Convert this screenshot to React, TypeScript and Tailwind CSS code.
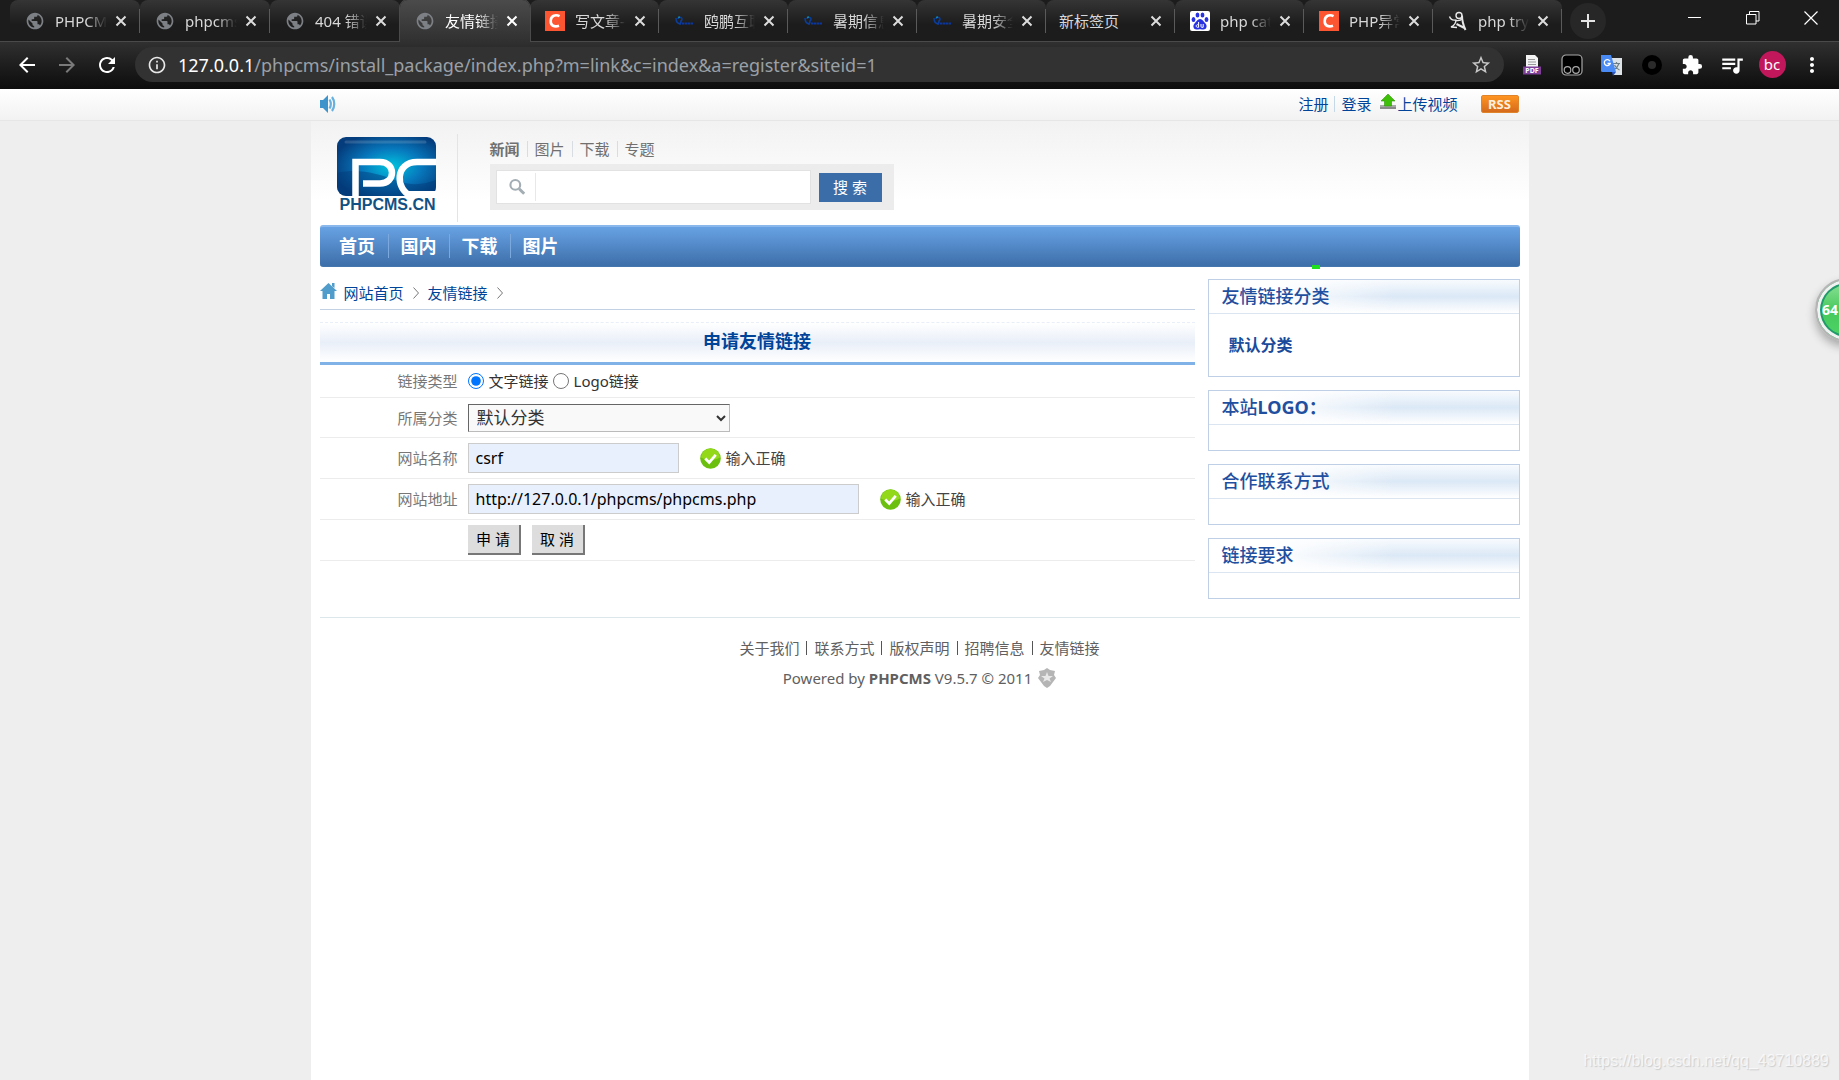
import { type ReactNode } from "react";
import {
  MdArrowBack,
  MdArrowForward,
  MdExtension,
  MdInfoOutline,
  MdMoreVert,
  MdPublic,
  MdQueueMusic,
  MdRefresh,
  MdStarBorder,
} from "react-icons/md";

type TabIcon = "globe" | "csdn" | "swirl" | "none" | "baidu" | "figure";
type Tab = { title: string; icon: TabIcon; active?: boolean; wide?: boolean };

const tabs: Tab[] = [
  { title: "PHPCMS", icon: "globe", wide: true },
  { title: "phpcms", icon: "globe", wide: true },
  { title: "404 错误", icon: "globe", wide: true },
  { title: "友情链接", icon: "globe", active: true, wide: true },
  { title: "写文章-C", icon: "csdn" },
  { title: "鸥鹏互联", icon: "swirl" },
  { title: "暑期信息", icon: "swirl" },
  { title: "暑期安全", icon: "swirl" },
  { title: "新标签页", icon: "none" },
  { title: "php cat", icon: "baidu" },
  { title: "PHP异常", icon: "csdn" },
  { title: "php try", icon: "figure" },
];

function Favicon({ kind }: { kind: TabIcon }) {
  if (kind === "globe") return <MdPublic className="size-5 shrink-0 text-[#7d8186]" />;
  if (kind === "csdn")
    return (
      <svg viewBox="0 0 20 20" className="size-5 shrink-0">
        <rect width="20" height="20" fill="#fc5531" />
        <path d="M14.6 5.2C10.4 3 6 4.600 5.700 9.800c-.3 5 3.700 6.600 8.300 4.900" fill="none" stroke="#fff" strokeWidth="2.600" />
      </svg>
    );
  if (kind === "swirl")
    return (
      <svg viewBox="0 0 20 20" className="size-5 shrink-0">
        <path d="M2 7c0 4 2 6 5 6M4 8a2 2 0 1 1 3 2c0 2-1 3-2 3" fill="none" stroke="#0a3d9c" strokeWidth="1.600" />
        <path d="M4 6.500l2-.5" stroke="#1487a8" strokeWidth="1.400" />
        <path d="M8 12.500h11" stroke="#0a36a0" strokeWidth="2.200" strokeDasharray="2.500 .5" />
      </svg>
    );
  if (kind === "baidu")
    return (
      <svg viewBox="0 0 20 20" className="size-5 shrink-0">
        <rect width="20" height="20" rx="2" fill="#fff" />
        <g fill="#2932e1">
          <ellipse cx="3.500" cy="8.500" rx="1.900" ry="2.500" />
          <ellipse cx="7.500" cy="4" rx="1.900" ry="2.600" />
          <ellipse cx="12.500" cy="4" rx="1.900" ry="2.600" />
          <ellipse cx="16.500" cy="8.500" rx="1.900" ry="2.500" />
          <path d="M10 8c2.500 0 3.500 2.500 5.500 4.500 2.200 2.300 1 6-2 6-1.500 0-2-.3-3.500-.3s-2 .3-3.500.3c-3 0-4.200-3.700-2-6C6.500 10.500 7.500 8 10 8z" />
        </g>
        <path d="M8.600 11v5.300H7.400a1.300 1.300 0 1 1 1.200-2M11 13v2.500c0 .6.400.8 1 .8h1.200V13" fill="none" stroke="#fff" />
      </svg>
    );
  if (kind === "figure")
    return (
      <svg viewBox="0 0 20 20" className="size-5 shrink-0" fill="none" stroke="#e8e8e8">
        <circle cx="11" cy="4.500" r="3" strokeWidth="1.400" />
        <path d="M1.500 5.500c1 3 3 4 6 3.500M8 8.500c0 3-1.500 6-5 7.500l6 .5M8 9.500c3 .5 5 0 6-2" strokeWidth="1.400" />
        <path d="M14 4.500c0 5 1 9 3.500 14.500M8.500 13l8 4" strokeWidth="2" />
      </svg>
    );
  return null;
}

function BrowserTab({ tab }: { tab: Tab }) {
  return (
    <div
      className={`flex items-center rounded-t-lg pr-2.5 ${tab.icon === "none" ? "pl-[13px]" : "pl-[15px]"} ${
        tab.wide ? "w-[130px]" : "w-[129px]"
      } ${
        tab.active
          ? "relative h-[42px] bg-linear-to-b from-[#4b4b4b] to-[#303030] text-white shadow-[0_0_0_1px_#4a4a4a] [clip-path:inset(0_-1px_0_-1px)]"
          : "h-[41px] bg-linear-to-b from-[#353535] to-[#1c1c1c] to-60% text-[#d8d8d8]"
      }`}
    >
      <Favicon kind={tab.icon} />
      <span
        className={`${
          tab.icon === "none" ? "" : "ml-2.5 mask-r-from-60% mask-r-to-100%"
        } flex-1 overflow-hidden text-[15px] whitespace-nowrap`}
      >
        {tab.title}
      </span>
      <button aria-label="关闭标签页" className="ml-2 mr-0.5">
        <svg viewBox="0 0 12 12" className="size-3" stroke={tab.active ? "#fff" : "#dcdcdc"} strokeWidth="2">
          <path d="M1.500 1.500l9 9M10.500 1.500l-9 9" />
        </svg>
      </button>
      {!tab.active && <i className="-mr-2.5 ml-2.5 h-6 w-px bg-[#5a5a5a]" />}
    </div>
  );
}

function Ext({ label, children }: { label: string; children: ReactNode }) {
  return (
    <button aria-label={label} className="flex w-10 items-center justify-center">
      {children}
    </button>
  );
}

function BrowserChrome() {
  return (
    <header className="bg-[#1c1c1c] font-['Noto_Sans','Noto_Sans_CJK_SC',sans-serif]">
      <div className="flex h-[42px] border-b border-[#4a4a4a] pl-2.5">
        {tabs.map((t) => (
          <BrowserTab key={t.title} tab={t} />
        ))}
        <button aria-label="新标签页" className="mt-[3px] ml-2 flex size-9 items-center justify-center rounded-full bg-[#272727]">
          <svg viewBox="0 0 16 16" className="size-4" stroke="#e4e4e4" strokeWidth="2">
            <path d="M8 1v14M1 8h14" />
          </svg>
        </button>
        <div className="mr-[21px] ml-auto flex h-9 items-center gap-11 text-white">
          <button aria-label="最小化">
            <svg viewBox="0 0 14 14" className="size-3.5" stroke="currentColor">
              <path d="M0 6.500h13" />
            </svg>
          </button>
          <button aria-label="还原">
            <svg viewBox="0 0 14 14" className="size-3.5" fill="none" stroke="currentColor">
              <path d="M.5 3.500h9.500v9.500H.5zM3.500 3.500V.5h9.500v9.500H10" />
            </svg>
          </button>
          <button aria-label="关闭">
            <svg viewBox="0 0 14 14" className="size-3.5" stroke="currentColor" strokeWidth="1.200">
              <path d="M.5.5l13 13M13.500.5l-13 13" />
            </svg>
          </button>
        </div>
      </div>
      <div className="flex h-[47px] items-center bg-linear-to-b from-[#303030] to-[#0d0d0d] pr-[7px] pb-0.5 pl-[15px] text-white">
        <button aria-label="后退"><MdArrowBack className="size-6" /></button>
        <button aria-label="前进" className="ml-4"><MdArrowForward className="size-6 text-[#7a7a7a]" /></button>
        <button aria-label="刷新" className="ml-4"><MdRefresh className="size-6" /></button>
        <div className="mr-2 ml-4 flex h-[35px] flex-1 items-center rounded-full bg-[#323232] pr-3 pl-3">
          <MdInfoOutline className="size-5 text-[#e8e8e8]" />
          <p className="ml-[11px] flex-1 text-[18px] leading-6 text-[#9aa0a6]">
            <span className="text-white">127.0.0.1</span>/phpcms/install_package/index.php?m=link&amp;c=index&amp;a=register&amp;siteid=1
          </p>
          <button aria-label="收藏"><MdStarBorder className="size-[22px] text-[#c8c8c8]" /></button>
        </div>
        <Ext label="PDF">
          <svg viewBox="0 0 18 20" className="h-5 w-[18px]">
            <path d="M3 0h9l3 3v10H3z" fill="#f4f4f4" />
            <path d="M5 4.500h7M5 7h8M5 9.500h8" stroke="#999" />
            <rect y="11.500" width="18" height="8" fill="#7d3f98" />
            <text x="9" y="18" textAnchor="middle" fontSize="7" fontWeight="700" fill="#fff">PDF</text>
          </svg>
        </Ext>
        <Ext label="脚本管理">
          <svg viewBox="0 0 22 22" className="size-[22px]" stroke="#a8a8a8" fill="#000" strokeWidth="1.200">
            <rect x="1" y="1" width="20" height="20" rx="4" />
            <circle cx="6.500" cy="16" r="3.300" />
            <circle cx="15" cy="16" r="3.300" />
          </svg>
        </Ext>
        <Ext label="翻译">
          <svg viewBox="0 0 22 22" className="size-[22px]">
            <path d="M9 4h12v17h-8z" fill="#dde3e6" />
            <path d="M12 9.500h7M15.500 8v1.500M18 9.500c-1 3-3 5-5 6M13.500 11c1 2 3 4 5 5" stroke="#6d7f88" fill="none" strokeWidth="1.200" />
            <path d="M0 1h10l5 17H1.500A1.500 1.500 0 0 1 0 16.500z" fill="#4a8af4" />
            <path d="M11 18h4l-3 4z" fill="#2a56c6" />
            <path d="M9 7.200A3 3 0 1 0 9.200 9.500H6.500" stroke="#fff" fill="none" strokeWidth="1.300" />
          </svg>
        </Ext>
        <Ext label="扩展">
          <i className="size-5 rounded-full border-[6px] border-black bg-[#2a2a2a]" />
        </Ext>
        <Ext label="扩展程序"><MdExtension className="size-[22px]" /></Ext>
        <Ext label="媒体"><MdQueueMusic className="size-[26px]" /></Ext>
        <Ext label="账户">
          <span className="flex size-[27px] items-center justify-center rounded-full bg-[#c2185b] text-[15px] leading-none">bc</span>
        </Ext>
        <Ext label="菜单"><MdMoreVert className="size-6" /></Ext>
      </div>
    </header>
  );
}

function TopBar() {
  return (
    <div className="border-b border-[#e6e6e6] bg-linear-to-b from-white to-[#f2f2f2]">
      <div className="mx-auto flex h-[31px] max-w-[1200px] items-center pb-0.5 text-[#004499]">
        <svg viewBox="0 0 16 18" className="h-[18px] w-4" aria-label="声音">
          <path d="M0 5h3l5-5v18l-5-5H0z" fill="#3f94cc" />
          <path d="M9.500 4.500c1.500 2.500 1.500 6.500 0 9M12 2c3 4 3 10 0 14" fill="none" stroke="#68b0de" strokeWidth="2.200" />
        </svg>
        <nav className="ml-auto flex items-center">
          <a href="#">注册</a>
          <i className="mx-1.5 h-4 w-px bg-[#c5d8e8]" />
          <a href="#">登录</a>
          <a href="#" className="ml-2 flex items-center">
            <svg viewBox="0 0 18 18" className="mb-1 size-[18px]">
              <path d="M1 12h16v4H1z" fill="#a9a9a9" />
              <path d="M1 14h16v2H1z" fill="#8a8a8a" />
              <path d="M9 1l7 7h-3.500v5h-7V8H2z" fill="#3fc008" stroke="#2e9606" strokeWidth=".6" />
            </svg>
            上传视频
          </a>
          <a
            href="#"
            className="mr-px ml-[23px] flex h-[18px] w-[38px] items-center justify-center rounded-[2px] border border-[#e0842c] bg-linear-to-b from-[#ff9420] to-[#d56a1c] text-[13px] font-bold text-[#ffefdd]"
          >
            RSS
          </a>
        </nav>
      </div>
    </div>
  );
}

function Logo() {
  return (
    <svg viewBox="0 0 99 74" className="h-[74px] w-[99px]" role="img" aria-label="PHPCMS.CN">
      <defs>
        <radialGradient id="logoGlow" cx=".55" cy=".5" r=".6">
          <stop offset="0" stopColor="#00c3de" />
          <stop offset=".5" stopColor="#0779bd" />
          <stop offset="1" stopColor="#043c7c" />
        </radialGradient>
      </defs>
      <rect width="99" height="59" rx="9" fill="url(#logoGlow)" />
      <path d="M0 36c20-5 40 0 58 7s30 4 41 0v8a8 8 0 0 1-8 8H9a9 9 0 0 1-9-9z" fill="#023a78" opacity=".45" />
      <path d="M9 5h79" stroke="#fff" strokeWidth="3" opacity=".15" strokeLinecap="round" />
      <path d="M18.500 60V25H43c16 0 16 21.500 0 21.500H26" fill="none" stroke="#fff" strokeWidth="6.500" />
      <path d="M99 25H80C58 25 58 52 74 59" fill="none" stroke="#fff" strokeWidth="6.500" />
      <path d="M72 54h27v6H72z" fill="#fff" />
      <text x="50.500" y="73" textAnchor="middle" fontFamily="Liberation Sans, sans-serif" fontSize="16" fontWeight="700" fill="#125184">
        PHPCMS.CN
      </text>
    </svg>
  );
}

function SiteHeader() {
  return (
    <div className="flex h-[103px] items-start pt-3">
      <a href="#" className="mt-[3px] ml-[17px]"><Logo /></a>
      <i className="ml-[21px] h-[88px] w-px bg-[#e4e4e4]" />
      <div className="ml-8 pt-[5px]">
        <nav className="flex items-center text-[#707070]">
          <a href="#" className="font-bold">新闻</a>
          {["图片", "下载", "专题"].map((t) => (
            <a href="#" key={t} className="ml-[7px] flex items-center gap-[7px]">
              <i className="h-4 w-px bg-[#d8dde4]" />
              {t}
            </a>
          ))}
        </nav>
        <form className="mt-[5px] flex h-[46px] items-center gap-2 bg-[#ececec] pr-3 pl-1.5" onSubmit={(e) => e.preventDefault()}>
          <label className="flex h-[34px] w-[315px] items-center border border-[#e2e2e2] bg-white">
            <svg viewBox="0 0 20 20" className="ml-3 size-5" fill="none" stroke="#a3adb4" aria-hidden="true">
              <circle cx="7.500" cy="7.500" r="5.800" strokeWidth="2.500" />
              <path d="M12 12l6 6" strokeWidth="3.500" />
            </svg>
            <i className="mx-2.5 h-7 w-px bg-[#e8e8e8]" />
            <input aria-label="搜索" className="w-full min-w-0 bg-transparent outline-none" />
          </label>
          <button className="h-[29px] w-[63px] bg-[#3b6ea8] text-white">搜 索</button>
        </form>
      </div>
    </div>
  );
}

function MainNav() {
  return (
    <nav className="flex h-[42px] items-center rounded-[3px] border-t-2 border-b border-t-[#8ab8ec] border-b-[#4577ae] bg-linear-to-b from-[#68a2e4] to-[#3d6fa9] pb-0.5 pl-[7px] text-lg leading-6 font-bold text-white">
      {["首页", "国内", "下载", "图片"].map((t, i) => (
        <a href="#" key={t} className={`w-[61px] text-center ${i > 0 ? "border-l border-[#7ba9de]" : ""}`}>
          {t}
        </a>
      ))}
    </nav>
  );
}

function Row({ label, id, children }: { label?: string; id?: string; children: ReactNode }) {
  return (
    <div className="flex items-center gap-2.5 border-b border-[#ececec]">
      <label htmlFor={id} className="w-[138px] text-right text-[#777]">{label}</label>
      {children}
    </div>
  );
}

function Valid() {
  return (
    <span className="ml-[21px] flex items-center gap-[5px] text-[#444]">
      <svg viewBox="0 0 20 20" className="size-[21px]">
        <circle cx="10" cy="10" r="9.800" fill="#6bc00f" />
        <path d="M1 9a9 8.500 0 0 1 18 0c-5 3-13 3-18 0z" fill="#93d91a" />
        <path d="M5 10l3.800 3.800L15 6.500" fill="none" stroke="#fff" strokeWidth="2.600" />
      </svg>
      输入正确
    </span>
  );
}

function ApplyForm() {
  const field = "h-[30px] border border-[#ccc] bg-[#e8f0fe] px-[7px] text-base text-black outline-none";
  const button = "h-[30px] w-[53px] border-r-2 border-b-2 border-[#777] bg-[#ddd] text-black";
  return (
    <form onSubmit={(e) => e.preventDefault()}>
      <h1 className="flex h-[43px] items-center justify-center border-t border-b-[3px] border-t-[#e9eff8] border-b-[#80b2e8] bg-linear-to-b from-white via-[#e9eff8] to-white pb-1 text-lg font-bold text-[#004499] [border-top-style:dashed]">
        申请友情链接
      </h1>
      <Row label="链接类型">
        <div className="flex h-8 items-center text-[#333]">
          <label className="flex items-center gap-[5px]">
            <input type="radio" name="type" defaultChecked className="size-4" />
            文字链接
          </label>
          <label className="ml-1 flex items-center gap-[5px]">
            <input type="radio" name="type" className="size-4" />
            Logo链接
          </label>
        </div>
      </Row>
      <Row label="所属分类" id="category">
        <div className="flex h-[39px] items-center">
          <select id="category" className="h-7 w-[262px] border border-t-[#666] border-r-[#bbb] border-b-[#bbb] border-l-[#666] bg-[#f9f9f9] pl-1 text-[17px] leading-6 text-[#333]">
            <option>默认分类</option>
          </select>
        </div>
      </Row>
      <Row label="网站名称" id="siteName">
        <div className="flex h-10 items-center">
          <input id="siteName" defaultValue="csrf" className={`w-[211px] ${field}`} />
          <Valid />
        </div>
      </Row>
      <Row label="网站地址" id="siteUrl">
        <div className="flex h-10 items-center">
          <input id="siteUrl" defaultValue="http://127.0.0.1/phpcms/phpcms.php" className={`w-[391px] ${field}`} />
          <Valid />
        </div>
      </Row>
      <Row>
        <div className="flex h-10 items-center gap-[11px]">
          <button type="submit" className={button}>申 请</button>
          <button type="reset" className={button}>取 消</button>
        </div>
      </Row>
    </form>
  );
}

function SideBox({ title, children }: { title: ReactNode; children?: ReactNode }) {
  return (
    <section className="border border-[#bfd0e6]">
      <h2 className="flex h-[34px] items-center border-b border-[#dbe5f2] bg-linear-to-b from-[#f8fbfe] via-[#dbe8f6] to-white">
        <span className="flex h-full w-full items-center bg-linear-to-r from-white from-20% to-transparent to-60% pb-0.5 pl-[13px] text-lg leading-6 font-medium text-[#1f4f9e]">
          {title}
        </span>
      </h2>
      {children ?? <div className="h-[25px]" />}
    </section>
  );
}

function Chevron() {
  return (
    <svg viewBox="0 0 6 12" className="mx-[9px] h-3 w-1.5" fill="none" stroke="#777">
      <path d="M.5.5l5 5.500-5 5.500" />
    </svg>
  );
}

function Footer() {
  return (
    <footer className="mt-[18px] border-t border-[#dce7ec] pt-[18px] text-center text-[#606060]">
      <nav className="flex items-center justify-center leading-6">
        {["关于我们", "联系方式", "版权声明", "招聘信息", "友情链接"].map((t, i) => (
          <span key={t} className="flex items-center">
            {i > 0 && <i className="mx-[7px] h-3.5 w-px bg-[#555]" />}
            <a href="#">{t}</a>
          </span>
        ))}
      </nav>
      <p className="mt-1.5 flex items-center justify-center gap-1.5 leading-6">
        <span>
          Powered by <b>PHPCMS</b> V9.5.7 © 2011
        </span>
        <svg viewBox="0 0 18 20" className="h-5 w-[18px]">
          <path d="M9 0l3 2 5 1-1 4 2 3-3 4-3 4-3 2-3-2-3-4-3-4 2-3-1-4 5-1z" fill="#b5b5b5" />
          <path d="M9 4l1.500 4H15l-3.500 2.500L13 14l-4-2-4 2 1.500-3.500L3 8h4.500z" fill="#e8e8e8" />
        </svg>
      </p>
    </footer>
  );
}

export default function App() {
  return (
    <div className="relative flex min-h-screen flex-col overflow-hidden bg-[#eee] font-['Noto_Sans','Noto_Sans_CJK_SC',sans-serif] text-[15px] leading-5">
      <BrowserChrome />
      <TopBar />
      <div className="mx-auto w-full max-w-[1218px] flex-1 bg-white bg-linear-to-b from-[#f2f2f2] to-white to-[80px] px-[9px] pt-px">
        <SiteHeader />
        <MainNav />
        <div className="flex gap-[13px] pt-3">
          <main className="min-w-0 flex-1">
            <nav className="mb-3 flex h-[31px] items-center border-b border-[#c2d1e4] pb-[3px] text-[#004499]">
              <svg viewBox="0 0 17 16" className="mr-[7px] mb-1 h-4 w-[17px]" fill="#509ccb">
                <path d="M8.500 0L17 8h-2.500v8H10v-5H7v5H2.500V8H0zM12 0h2.500v5L12 3z" />
              </svg>
              <a href="#">网站首页</a>
              <Chevron />
              <a href="#">友情链接</a>
              <Chevron />
            </nav>
            <ApplyForm />
          </main>
          <aside className="flex w-[312px] flex-col gap-[13px]">
            <SideBox title="友情链接分类">
              <ul className="h-[62px] pt-[19px] pl-5 text-base leading-6 font-bold text-[#1a4a9a]">
                <li><a href="#">默认分类</a></li>
              </ul>
            </SideBox>
            <SideBox title={<>本站<b>LOGO：</b></>} />
            <SideBox title="合作联系方式" />
            <SideBox title="链接要求" />
          </aside>
        </div>
        <Footer />
      </div>

      <i className="absolute top-[265px] left-[1312px] h-1 w-2 bg-[#1fe01f]" />
      <div className="absolute top-[278px] -right-[40px] flex size-[64px] items-center rounded-full border-2 border-[#b5b5b5] bg-linear-to-b from-[#8fe39a] via-[#45c95c] to-[#4fd466] pl-[5px] text-sm font-bold text-white shadow-[0_5px_10px_rgba(0,0,0,0.3),inset_0_0_0_3px_#f2f2f2,inset_0_0_0_5px_#219a6c]">
        64
      </div>
      <p className="absolute right-2.5 bottom-[7px] font-['Liberation_Sans',sans-serif] text-base text-white/70 [text-shadow:1px_1px_1px_#ccc]">
        https://blog.csdn.net/qq_43710889
      </p>
    </div>
  );
}
